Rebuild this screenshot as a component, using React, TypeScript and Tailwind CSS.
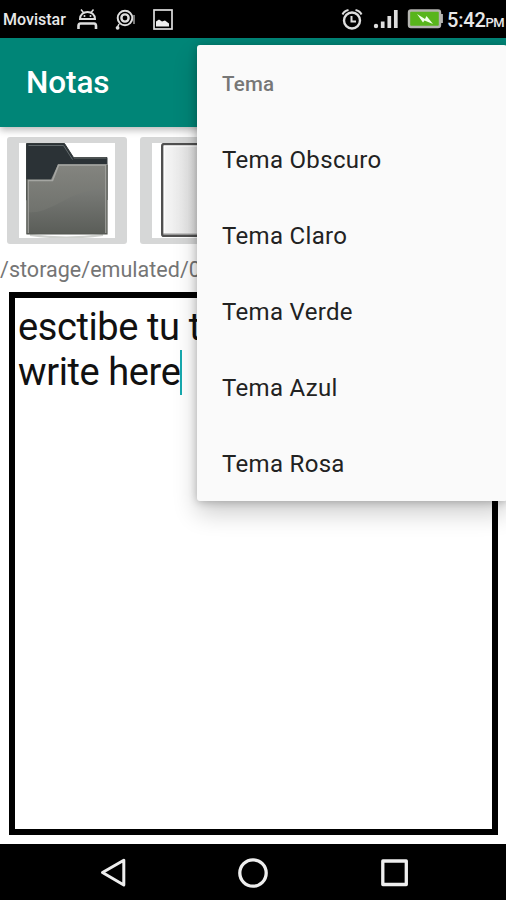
const themes = ['Tema Obscuro', 'Tema Claro', 'Tema Verde', 'Tema Azul', 'Tema Rosa'];

function StatusBar() {
  return (
    <div className="flex h-[38px] shrink-0 items-center bg-black text-[#e8e8e8]">
      <span className="w-[77px] pt-[2px] pl-[3px] text-[16px] leading-none font-medium whitespace-nowrap">Movistar</span>
      <svg className="h-[24px] w-[100px] shrink-0" viewBox="77 7 100 24" fill="none" stroke="#dedede">
        <path d="M80 19C80 9.500 95 9.500 95 19Z" strokeWidth="2" />
        <path d="M81 9.500l2.800 3.500M93.500 9.500l-2.800 3.500" strokeWidth="1.500" />
        <circle cx="84.500" cy="16" r="1" fill="#dedede" stroke="none" />
        <circle cx="90.500" cy="16" r="1" fill="#dedede" stroke="none" />
        <path d="M78.500 29v-3q0-2.500 2-2.500h13.500q2 0 2 2.500v3" strokeWidth="2.600" />
        <circle cx="125" cy="18" r="7.300" strokeWidth="2" />
        <circle cx="125" cy="18" r="3.600" strokeWidth="2.400" />
        <path d="M119 24l-1.500 3" strokeWidth="1.500" />
        <circle cx="117.600" cy="27.800" r="1.900" fill="#dedede" stroke="none" />
        <path d="M134 15v9" stroke="#777" strokeWidth="2" />
        <rect x="154" y="10" width="18" height="19" strokeWidth="1.700" />
        <path d="M156 26.500v-5l3-2 3 2 3-1 4 3v3Z" fill="#eee" stroke="none" />
      </svg>
      <svg className="ml-auto h-[24px] w-[103px] shrink-0" viewBox="340 7 103 24" fill="none" stroke="#dedede">
        <circle cx="352" cy="20.500" r="8" strokeWidth="2.400" />
        <path d="M342.500 14.500q1.500-3.500 6-4.500M361.500 14.500q-1.500-3.500-6-4.500" strokeWidth="2" />
        <path d="M351.500 16v5.500h4.500" strokeWidth="2" />
        <circle cx="376" cy="26" r="2.200" fill="#dedede" stroke="none" />
        <path d="M382.700 28v-6.500M389.300 28v-12M395.800 28v-18" strokeWidth="3.700" />
        <rect x="409" y="10.500" width="31" height="16.500" rx="2" fill="#58b51c" stroke="#b4b4b0" strokeWidth="2.400" />
        <path d="M441.700 14v9" stroke="#b4b4b0" strokeWidth="2.400" />
        <path d="M417 14l8 5 1.500-3 6.500 8-8.500-3.500-1.500 2Z" fill="#f1ffe8" stroke="none" />
      </svg>
      <span className="w-[63px] pt-[2px] pl-[4px] text-[20px] leading-none font-medium tracking-[-0.2px] whitespace-nowrap">
        5:42<span className="text-[13px] tracking-[-0.500px]">PM</span>
      </span>
    </div>
  );
}

function FolderIcon() {
  return (
    <svg className="h-[95px] w-[96px] bg-white" viewBox="19 143 96 95">
      <defs>
        <linearGradient id="front" x1="0" y1="0" x2="0" y2="1">
          <stop offset="0" stopColor="#8a8b88" />
          <stop offset="1" stopColor="#5a5d58" />
        </linearGradient>
        <linearGradient id="gloss" x1="0" y1="0" x2="0" y2="1">
          <stop offset="0" stopColor="#83847f" />
          <stop offset="1" stopColor="#70726d" />
        </linearGradient>
      </defs>
      <path d="M30 235q36 5 73 0" stroke="#cfd1ce" strokeWidth="2" fill="none" />
      <path d="M26.500 143.500H64.500L73.500 157.500H107V200H26.500Z" fill="#2b3236" stroke="#33393a" />
      <path d="M28.500 145.500H63.500L72.500 159.500" fill="none" stroke="#626a6c" />
      <path d="M74 158H106.500" stroke="#6b6e6d" />
      <path d="M26.500 179.500H51L58 164.500H107V234H26.500Z" fill="url(#front)" />
      <path d="M28 181H52L59 166H106V188Q82 190 61 202T28 212Z" fill="url(#gloss)" />
      <path d="M28 233V180.500H52.500L58.500 165H106V233" fill="none" stroke="#a5a6a2" strokeWidth="1.600" />
      <path d="M27 179V234H107V165" fill="none" stroke="#555852" strokeWidth="1.200" />
    </svg>
  );
}

function DocumentIcon() {
  return (
    <svg className="h-[95px] w-[96px] bg-white" viewBox="152 143 96 95">
      <defs>
        <linearGradient id="paper">
          <stop offset="0" stopColor="#f7f7f7" />
          <stop offset="1" stopColor="#c4c4c4" />
        </linearGradient>
      </defs>
      <rect x="162.300" y="144.200" width="75" height="91.500" rx="1.500" fill="url(#paper)" stroke="#505050" strokeWidth="2.600" />
      <rect x="164.200" y="146" width="71" height="87.500" fill="none" stroke="#fff" strokeWidth="1.200" />
      <path d="M163 234H236" stroke="#888" />
    </svg>
  );
}

function ThemeMenu() {
  return (
    <div className="absolute top-[45px] left-[197px] h-[456px] w-[310px] rounded-[3px] bg-[#fafafa] pt-px pl-[25px] shadow-[0_12px_24px_rgba(0,0,0,0.2),0_1px_8px_rgba(0,0,0,0.24)]">
      <div className="flex h-[76px] items-center text-[20.500px] font-medium tracking-[0.2px] text-[#777]">Tema</div>
      {themes.map((theme) => (
        <div key={theme} className="flex h-[76px] items-center text-[24px] tracking-[0.32px] text-[#222]">
          {theme}
        </div>
      ))}
    </div>
  );
}

function NavigationBar() {
  return (
    <div className="flex h-[56px] shrink-0 bg-black">
      <svg className="h-[56px] w-[506px]" viewBox="0 844 506 56" fill="none" stroke="#eee" strokeWidth="3.300" strokeLinejoin="round">
        <path d="M102.500 872.500L123.800 860.300V885Z" strokeWidth="3" />
        <circle cx="253" cy="873" r="13.200" />
        <rect x="382.800" y="861" width="23.500" height="23.500" />
      </svg>
    </div>
  );
}

export default function App() {
  return (
    <div className="relative flex h-[900px] w-[506px] flex-col overflow-hidden bg-white font-['Roboto',sans-serif]">
      <StatusBar />
      <header className="z-0 flex h-[89px] shrink-0 items-center bg-[#008577] pl-[26px] shadow-[0_3px_7px_rgba(0,0,0,0.28)]">
        <h1 className="text-[31.500px] font-medium tracking-[-0.1px] text-white">Notas</h1>
      </header>
      <div className="flex shrink-0 gap-[13px] pt-[10px] pl-[7px]">
        <button className="flex h-[107px] w-[120px] shrink-0 items-center justify-center rounded-[3px] bg-[#d6d7d7]"><FolderIcon /></button>
        <button className="flex h-[107px] w-[120px] shrink-0 items-center justify-center rounded-[3px] bg-[#d6d7d7]"><DocumentIcon /></button>
      </div>
      <p className="mt-[11px] h-[30px] shrink-0 text-[21.500px] leading-[30px] tracking-[0.02px] whitespace-nowrap text-[#757575]">/storage/emulated/0</p>
      <main className="mr-[8px] mb-[9px] ml-[9px] mt-[7px] flex-1 border-[6px] border-black pt-[7px] pl-[3px] text-[38px] leading-[44.500px] tracking-[-0.400px] text-[#111]">
        <div>esctibe tu t</div>
        <div className="flex items-center">write here<span className="h-[45px] w-[2px] bg-[#16a9ae]" /></div>
      </main>
      <NavigationBar />
      <ThemeMenu />
    </div>
  );
}
